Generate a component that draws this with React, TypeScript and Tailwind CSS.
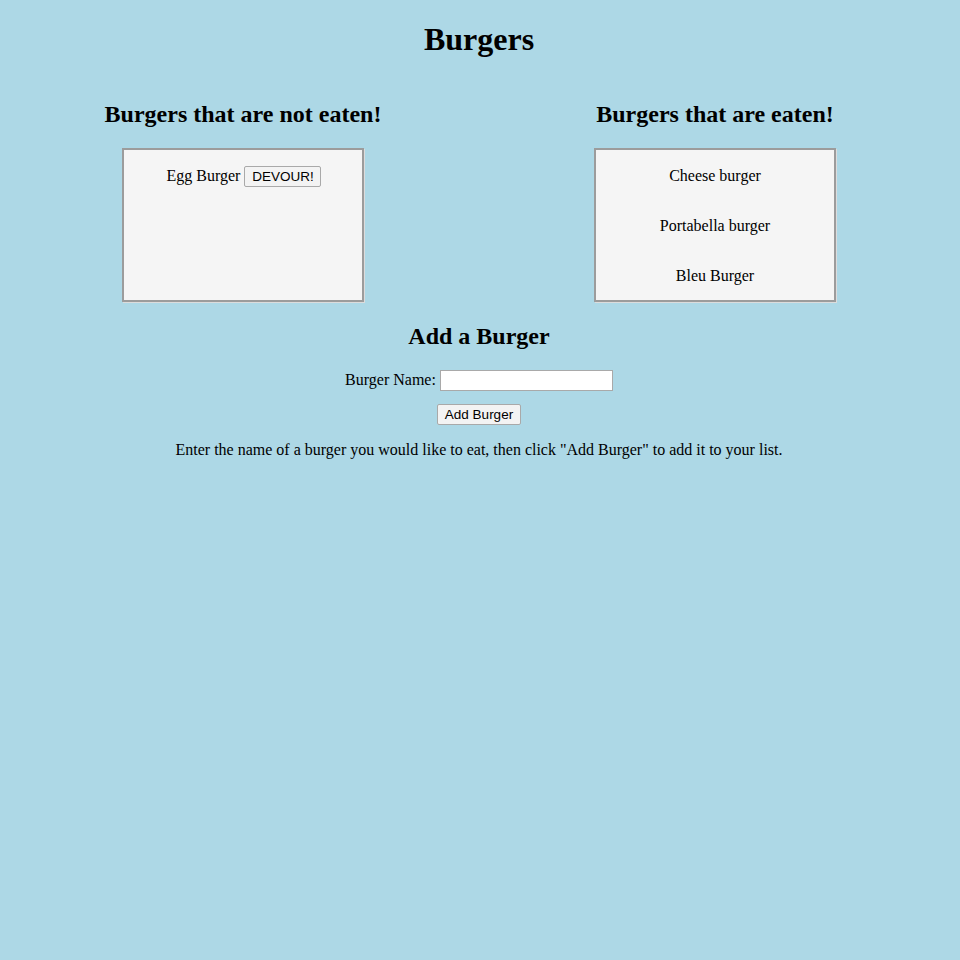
import React from "react";

const serif = { fontFamily: '"Liberation Serif", "Times New Roman", serif' };

function Btn({ children, w }: { children: React.ReactNode; w: string }) {
  return (
    <button
      className={`${w} h-[21px] bg-[#f3f3f3] border border-[#a9a9a9] rounded-[2px] text-[13.5px] leading-[15px] text-black font-['Liberation_Sans',Arial,sans-serif] px-[6px]`}
    >
      {children}
    </button>
  );
}

export default function App() {
  return (
    <div className="min-h-screen bg-[#add8e6] text-black text-[16px] pl-[7px] pr-[9px]" style={serif}>
      <h1 className="pt-[21px] text-[32px] leading-[37px] font-bold text-center">Burgers</h1>

      <div className="mt-[42px] grid grid-cols-2">
        <div className="flex flex-col items-center">
          <h2 className="text-[24px] leading-[28px] font-bold">Burgers that are not eaten!</h2>
          <div className="mt-[20px] w-[242px] h-[154px] bg-[#f5f5f5] border-2 border-[#9c9c9c] shadow-[1px_1px_0_#dcdcdc] pt-[16px] flex flex-col items-center">
            <div className="flex items-baseline gap-[4px] pl-[2px]">
              <span className="leading-[18px]">Egg Burger</span>
              <Btn w="w-[77px]">DEVOUR!</Btn>
            </div>
          </div>
        </div>
        <div className="flex flex-col items-center">
          <h2 className="text-[24px] leading-[28px] font-bold">Burgers that are eaten!</h2>
          <div className="mt-[20px] w-[242px] h-[154px] bg-[#f5f5f5] border-2 border-[#9c9c9c] shadow-[1px_1px_0_#dcdcdc] pt-[17px] flex flex-col items-center gap-[32px]">
            <div className="leading-[18px]">Cheese burger</div>
            <div className="leading-[18px]">Portabella burger</div>
            <div className="leading-[18px]">Bleu Burger</div>
          </div>
        </div>
      </div>

      <h2 className="mt-[20px] text-[24px] leading-[28px] font-bold text-center">Add a Burger</h2>
      <div className="mt-[20px] flex items-center justify-center gap-[4px]">
        <span className="leading-[18px] pb-[2px]">Burger Name:</span>
        <input
          type="text"
          className="w-[173px] h-[21px] bg-white border border-[#a9a9a9] px-[2px] text-[13.33px] outline-none"
        />
      </div>
      <div className="mt-[13px] flex justify-center">
        <Btn w="w-[84px]">Add Burger</Btn>
      </div>
      <p className="mt-[16px] text-center leading-[18px]">
        Enter the name of a burger you would like to eat, then click "Add Burger" to add it to your list.
      </p>
    </div>
  );
}
